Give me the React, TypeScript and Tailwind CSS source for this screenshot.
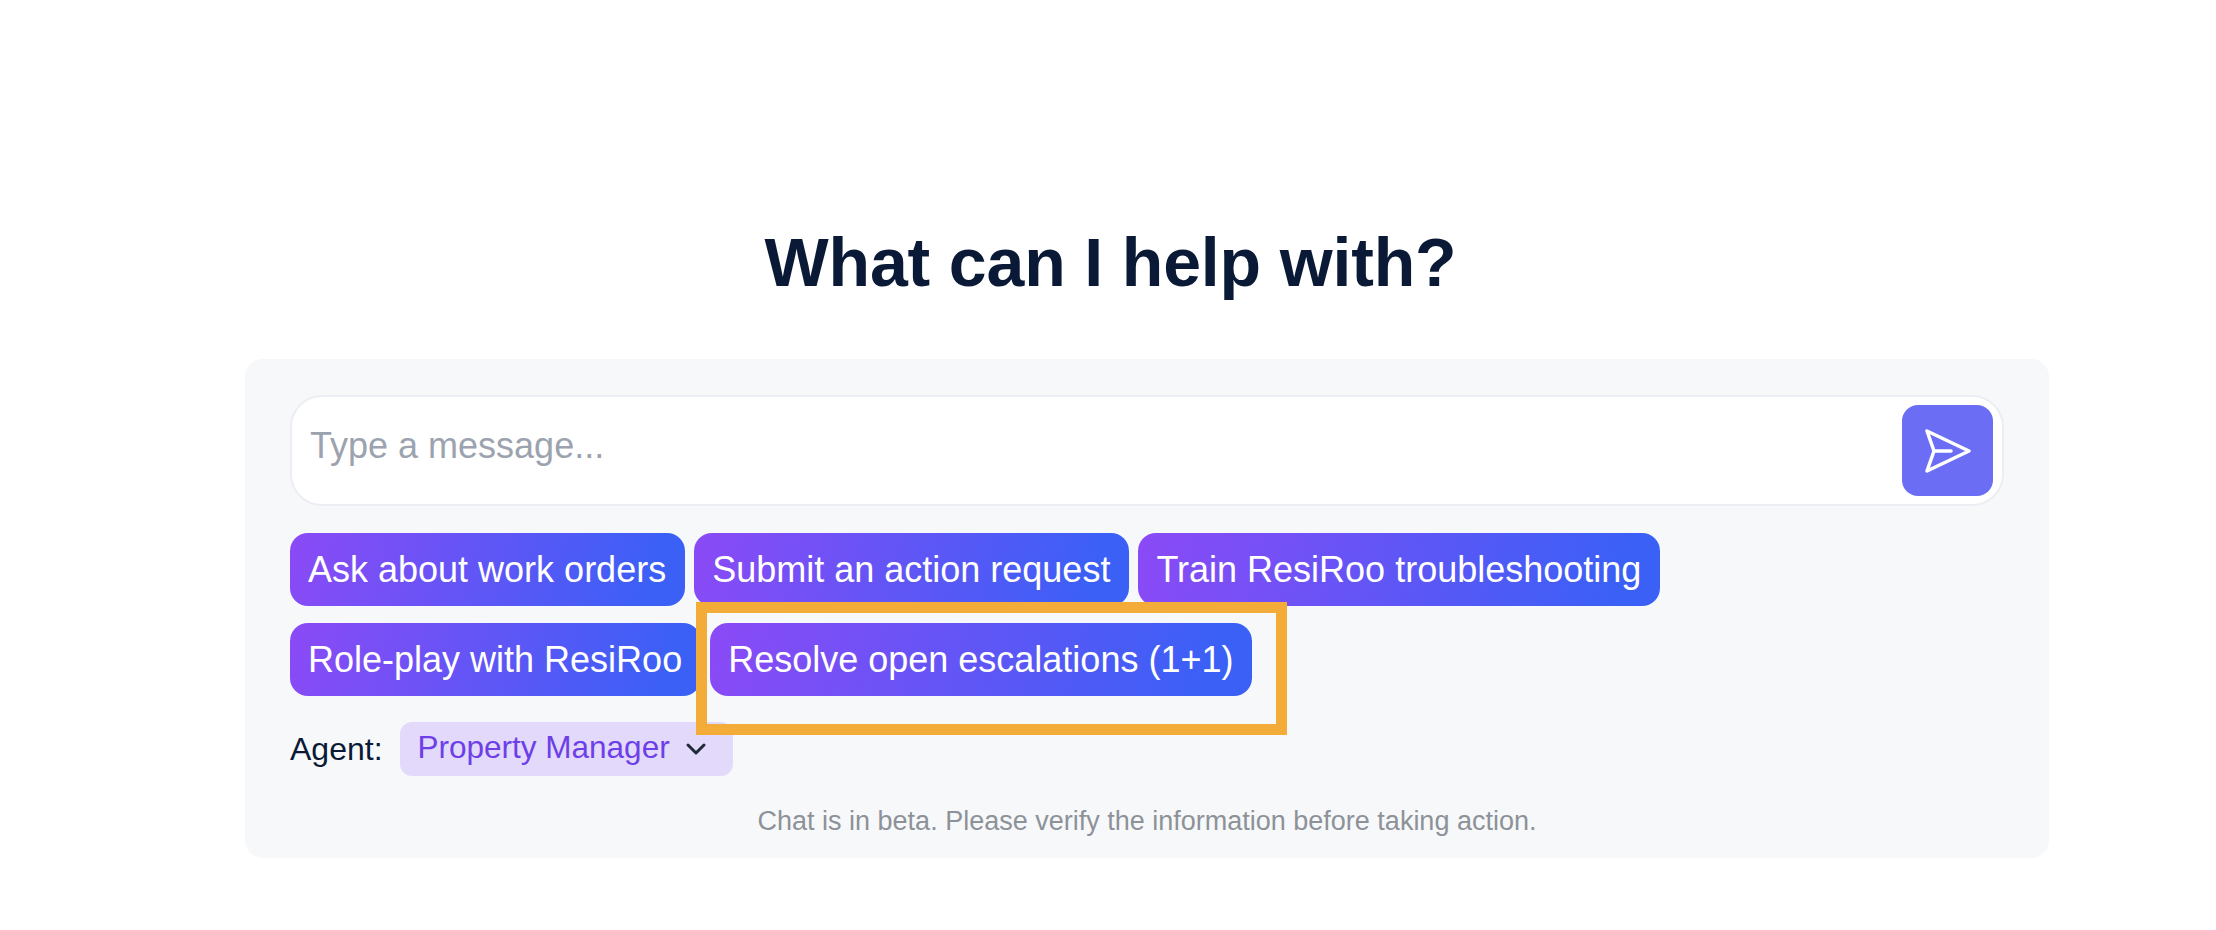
import React from "react";

const chipClass =
  "h-[73px] shrink-0 rounded-[18px] bg-[linear-gradient(105deg,#8b4af6_0%,#3a60f6_92%)] pl-[18px] pr-[19px] text-[36px] leading-none text-white flex items-center whitespace-nowrap";

function Chip({ label }: { label: string }) {
  return <div className={chipClass}>{label}</div>;
}

export default function App() {
  return (
    <div className="h-[930px] w-full overflow-hidden bg-white font-['Liberation_Sans',Arial,sans-serif]">
      <h1 className="pl-[5px] pt-[222px] text-center text-[68px] font-bold leading-[80px] tracking-[-0.15px] text-[#0a1a36]">
        What can I help with?
      </h1>
      <div className="relative ml-[245px] mt-[57px] h-[499px] w-[1804px] rounded-[18px] bg-[#f7f8fa] pl-[45px] pr-[45px] pt-[36px]">
        <div className="flex h-[111px] items-center justify-between rounded-[32px] border-2 border-[#eceef4] bg-white pl-[18px] pr-[9px]">
          <span className="-mt-[10px] text-[36px] text-[#9ca3af]">Type a message...</span>
          <div className="flex h-[91px] w-[91px] items-center justify-center rounded-[16px] bg-[#6b6ef5]">
            <svg width="46" height="44" viewBox="0 0 46 44" fill="none" stroke="white" strokeWidth="3.5" strokeLinejoin="round" strokeLinecap="round">
              <path d="M2 2 L44 22 L2 42 L9 22 Z" />
              <path d="M9 22 L26 22" />
            </svg>
          </div>
        </div>
        <div className="mt-[27px] flex gap-[9px]">
          <Chip label="Ask about work orders" />
          <Chip label="Submit an action request" />
          <Chip label="Train ResiRoo troubleshooting" />
        </div>
        <div className="mt-[17px] flex gap-[9px]">
          <Chip label="Role-play with ResiRoo" />
          <Chip label="Resolve open escalations (1+1)" />
        </div>
        <div className="mt-[26px] flex items-center gap-[17px]">
          <span className="text-[32px] text-[#0a1a36]">Agent:</span>
          <div className="flex h-[54px] items-center gap-[15px] rounded-[12px] bg-[#e3d9fb] pl-[18px] pr-[26px]">
            <span className="-mt-[2px] text-[31.5px] text-[#6d3fe8]">Property Manager</span>
            <svg width="22" height="14" viewBox="0 0 22 14" fill="none" stroke="#1f2937" strokeWidth="3" strokeLinecap="round" strokeLinejoin="round">
              <path d="M3 3 L11 11 L19 3" />
            </svg>
          </div>
        </div>
        <p className="mt-[25px] text-center text-[27px] text-[#8d9299]">
          Chat is in beta. Please verify the information before taking action.
        </p>
        <div className="pointer-events-none absolute left-[451px] top-[243px] h-[133px] w-[591px] border-[11px] border-[#f4ac39]" />
      </div>
    </div>
  );
}
